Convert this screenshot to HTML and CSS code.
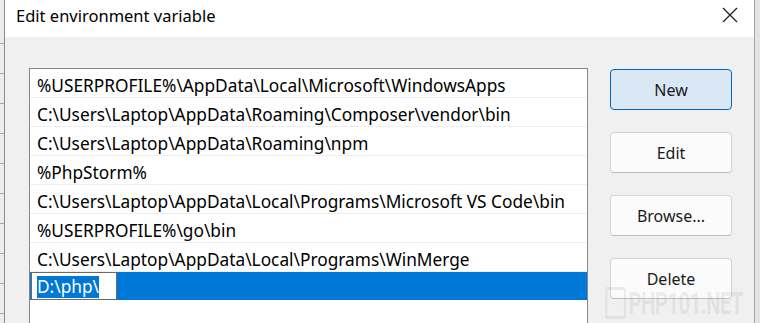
FILE: index.html
```html
<!doctype html>
<html>
<head>
    <meta charset="utf-8">
    <title>Edit environment variable</title>
    <link rel="stylesheet" href="styles.css">
</head>
<body>
    <div class="desk">
        <div class="behind left">
            <span class="stub"></span>
            <span class="stub"></span>
            <span class="stub"></span>
            <span class="stub"></span>
            <span class="stub"></span>
            <span class="stub"></span>
            <span class="stub"></span>
            <span class="stub"></span>
            <span class="stub"></span>
            <span class="stub"></span>
        </div>
        <div class="dialog">
            <div class="titlebar">
                <span class="title">Edit environment variable</span>
                <svg class="close" width="16" height="16" viewBox="0 0 16 16">
                    <path d="M1 1 L15 15 M15 1 L1 15" stroke="#1a1a1a" stroke-width="1.2" fill="none"/>
                </svg>
            </div>
            <div class="content">
                <div class="listbox">
                    <div class="row">%USERPROFILE%\AppData\Local\Microsoft\WindowsApps</div>
                    <div class="row">C:\Users\Laptop\AppData\Roaming\Composer\vendor\bin</div>
                    <div class="row">C:\Users\Laptop\AppData\Roaming\npm</div>
                    <div class="row">%PhpStorm%</div>
                    <div class="row">C:\Users\Laptop\AppData\Local\Programs\Microsoft VS Code\bin</div>
                    <div class="row">%USERPROFILE%\go\bin</div>
                    <div class="row">C:\Users\Laptop\AppData\Local\Programs\WinMerge</div>
                    <div class="row selected">
                        <div class="editbox"><span class="sel">D:\php\</span></div>
                    </div>
                </div>
                <div class="buttons">
                    <button class="btn primary">New</button>
                    <button class="btn">Edit</button>
                    <button class="btn">Browse...</button>
                    <button class="btn">Delete</button>
                </div>
            </div>
            <div class="watermark"><span class="wm-logo"></span>PHP101.NET</div>
        </div>
        <div class="behind right"></div>
    </div>
</body>
</html>
```

FILE: styles.css
```css
html, body {
    margin: 0;
    padding: 0;
}
body {
    width: 760px;
    height: 323px;
    overflow: hidden;
    background-color: #e6e6e6;
    font-family: "Noto Sans", sans-serif;
    color: #000;
}
.desk {
    display: flex;
    height: 323px;
}
.behind {
    background-color: #ececec;
}
.behind.left {
    width: 4px;
    display: flex;
    flex-direction: column;
    overflow: hidden;
    padding-top: 14px;
}
.stub {
    height: 29px;
    flex-shrink: 0;
    border-bottom: 1px solid #a8a8a8;
}
.behind.right {
    width: 5px;
    background-color: #e4e4e4;
}
.dialog {
    position: relative;
    flex: 1;
    display: flex;
    flex-direction: column;
    border-left: 1px solid #8c8c8c;
    border-right: 1px solid #a5a5a5;
    background-color: #f0f0f0;
    overflow: hidden;
}
.titlebar {
    height: 37px;
    flex-shrink: 0;
    background-color: #fff;
    display: flex;
    align-items: center;
    justify-content: space-between;
    padding-left: 11px;
    padding-right: 16px;
}
.title {
    font-size: 16.5px;
    margin-top: -6px;
}
.close {
    margin-top: -7px;
}
.content {
    flex: 1;
    display: flex;
    padding-top: 31px;
    padding-left: 24px;
}
.listbox {
    width: 557px;
    flex-shrink: 0;
    height: 260px;
    background-color: #fff;
    border: 1px solid #828790;
    border-bottom: none;
}
.row {
    height: 23px;
    padding-top: 5px;
    line-height: 23px;
    border-bottom: 1px solid #f0f0f0;
    padding-left: 7px;
    font-size: 17.3px;
    white-space: nowrap;
}
.row.selected {
    height: 28px;
    padding-top: 0;
    line-height: 28px;
    background-color: #0078d7;
    padding-left: 1px;
    border-bottom: none;
}
.editbox {
    width: 79px;
    height: 26px;
    border: 1px solid #6b6b6b;
    background-color: #fff;
    padding-left: 5px;
    line-height: 27px;
    overflow: hidden;
}
.sel {
    background-color: #0078d7;
    color: #fff;
    display: inline-block;
    line-height: 22px;
}
.buttons {
    margin-left: 22px;
    display: flex;
    flex-direction: column;
    gap: 22px;
    padding-top: 1px;
}
.btn {
    width: 122px;
    height: 41px;
    font-family: "Noto Sans", sans-serif;
    font-size: 16px;
    color: #1a1a1a;
    background-color: #fbfbfb;
    border: 1px solid #d3d3d3;
    border-bottom-color: #bdbdbd;
    border-radius: 4px;
    padding: 0;
}
.btn.primary {
    background-color: #dae7f4;
    border: 1px solid #0067c0;
}
.watermark {
    position: absolute;
    right: 11px;
    bottom: 4px;
    font-family: "Roboto", sans-serif;
    font-weight: bold;
    font-size: 32px;
    line-height: 32px;
    letter-spacing: -1px;
    color: rgba(150, 150, 150, 0.16);
    display: flex;
    align-items: center;
    gap: 4px;
    transform: scaleX(0.64);
    transform-origin: right center;
}
.wm-logo {
    width: 26px;
    height: 26px;
    border: 3px solid rgba(150, 150, 150, 0.16);
    border-radius: 3px;
}
```
